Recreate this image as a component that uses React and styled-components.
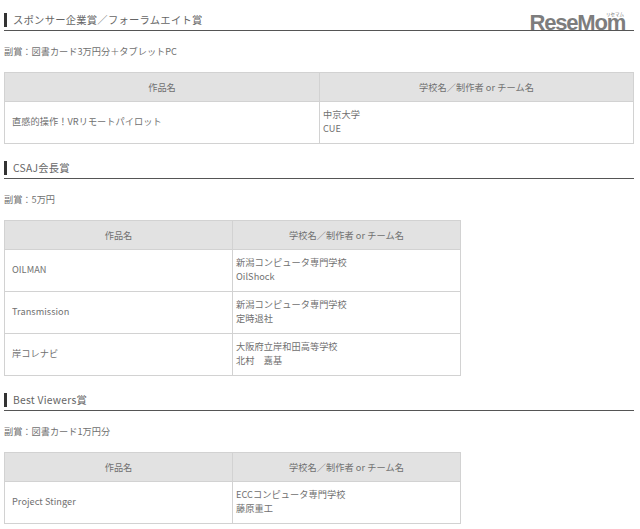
import React from "react";
import styled, { createGlobalStyle } from "styled-components";

const GlobalStyle = createGlobalStyle`
  html, body {
    margin: 0;
    padding: 0;
    background: #fff;
  }
  body {
    font-family: "Noto Sans CJK JP", "Noto Sans", sans-serif;
    color: #707070;
  }
`;

const Page = styled.div`
  position: relative;
  width: 640px;
  height: 529px;
  padding: 13px 6px 0 4px;
  box-sizing: border-box;
  overflow: hidden;
`;

const Logo = styled.div`
  position: absolute;
  top: 15px;
  right: 15px;
  font-family: "Liberation Sans", sans-serif;
  font-weight: 700;
  font-size: 22px;
  line-height: 16px;
  letter-spacing: -1.2px;
  color: #7d7d7d;
`;

const LogoRuby = styled.span`
  position: absolute;
  top: -3px;
  right: 1px;
  font-family: "Noto Sans CJK JP", sans-serif;
  font-size: 4.5px;
  font-weight: 400;
  line-height: 5px;
  letter-spacing: 0;
  color: #777;
`;

const Section = styled.section`
  margin-bottom: 17px;
`;

const Heading = styled.h2`
  display: flex;
  align-items: center;
  height: 17px;
  margin: 0;
  border-bottom: 1px solid #555;
  box-sizing: content-box;
  font-size: 10.3px;
  font-weight: 400;
  line-height: 14px;
  letter-spacing: 0.25px;
  color: #666;

  &::before {
    content: "";
    width: 3px;
    height: 14px;
    margin: 0 6px 4px 0;
    background: #333;
  }
  & > span {
    margin-bottom: 3px;
  }
`;

const Note = styled.p`
  margin: 14px 0 15px;
  font-size: 9.2px;
  line-height: 12px;
  color: #707070;
`;

const Table = styled.table`
  width: ${(p) => p.$width}px;
  table-layout: fixed;
  border-collapse: collapse;
  font-size: 9.2px;
  line-height: 14px;
  letter-spacing: 0.05px;
`;

const HeadCell = styled.th`
  width: ${(p) => (p.$width ? `${p.$width}px` : "auto")};
  height: 28px;
  padding: 0;
  border: 1px solid #d2d2d2;
  background: #e2e2e2;
  font-weight: 400;
  text-align: center;
  color: #707070;
`;

const Cell = styled.td`
  height: 42px;
  padding: 0 8px 3px 7px;
  border: 1px solid #d2d2d2;
  box-sizing: border-box;
  color: #707070;
`;

const CreatorCell = styled(Cell)`
  padding: 0 3px 3px;
`;

const sections = [
  {
    title: "スポンサー企業賞／フォーラムエイト賞",
    note: "副賞：図書カード3万円分＋タブレットPC",
    width: 630,
    firstColumn: 314,
    rows: [["直感的操作！VRリモートパイロット", "中京大学", "CUE"]],
  },
  {
    title: "CSAJ会長賞",
    note: "副賞：5万円",
    width: 457,
    firstColumn: 227,
    rows: [
      ["OILMAN", "新潟コンピュータ専門学校", "OilShock"],
      ["Transmission", "新潟コンピュータ専門学校", "定時退社"],
      ["岸コレナビ", "大阪府立岸和田高等学校", "北村　嘉基"],
    ],
  },
  {
    title: "Best Viewers賞",
    note: "副賞：図書カード1万円分",
    width: 457,
    firstColumn: 227,
    rows: [["Project Stinger", "ECCコンピュータ専門学校", "藤原重工"]],
  },
];

const App = () => (
  <Page>
    <GlobalStyle />
    {sections.map((section) => (
      <Section key={section.title}>
        <Heading>
          <span>{section.title}</span>
        </Heading>
        <Note>{section.note}</Note>
        <Table $width={section.width}>
          <thead>
            <tr>
              <HeadCell $width={section.firstColumn}>作品名</HeadCell>
              <HeadCell>学校名／制作者 or チーム名</HeadCell>
            </tr>
          </thead>
          <tbody>
            {section.rows.map(([work, school, author]) => (
              <tr key={work}>
                <Cell>{work}</Cell>
                <CreatorCell>
                  {school}
                  <br />
                  {author}
                </CreatorCell>
              </tr>
            ))}
          </tbody>
        </Table>
      </Section>
    ))}
    <Logo>
      ReseMom
      <LogoRuby>リセマム</LogoRuby>
    </Logo>
  </Page>
);

export default App;
